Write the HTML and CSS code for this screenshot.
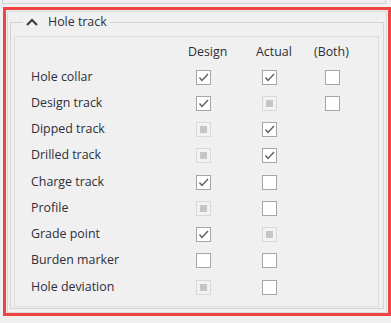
FILE: index.html
```html
<!DOCTYPE html>
<html lang="en">
<head>
    <meta charset="UTF-8">
    <title>Hole track</title>
    <link rel="stylesheet" href="styles.css">
</head>
<body>
    <div class="prev"></div>

    <div class="highlight">
        <div class="panel">
            <fieldset class="group">
                <legend class="group-title">
                    <svg class="chevron" width="12" height="8" viewBox="0 0 12 8"><path d="M1 7 L6 2 L11 7"/></svg>
                    <span>Hole track</span>
                </legend>
                <div class="inner">
                    <div class="grid">
                        <div class="cell"></div>
                        <div class="cell head">Design</div>
                        <div class="cell head">Actual</div>
                        <div class="cell head">(Both)</div>

                        <div class="cell label">Hole collar</div>
                        <div class="cell col-design"><span class="cb checked"><svg viewBox="0 0 13 13"><path d="M2.5 6.5 L5 9.5 L11 3"/></svg></span></div>
                        <div class="cell col-actual"><span class="cb checked"><svg viewBox="0 0 13 13"><path d="M2.5 6.5 L5 9.5 L11 3"/></svg></span></div>
                        <div class="cell col-both"><span class="cb"></span></div>

                        <div class="cell label">Design track</div>
                        <div class="cell col-design"><span class="cb checked"><svg viewBox="0 0 13 13"><path d="M2.5 6.5 L5 9.5 L11 3"/></svg></span></div>
                        <div class="cell col-actual"><span class="cb ind"><i></i></span></div>
                        <div class="cell col-both"><span class="cb"></span></div>

                        <div class="cell label">Dipped track</div>
                        <div class="cell col-design"><span class="cb ind"><i></i></span></div>
                        <div class="cell col-actual"><span class="cb checked"><svg viewBox="0 0 13 13"><path d="M2.5 6.5 L5 9.5 L11 3"/></svg></span></div>
                        <div class="cell col-both"></div>

                        <div class="cell label">Drilled track</div>
                        <div class="cell col-design"><span class="cb ind"><i></i></span></div>
                        <div class="cell col-actual"><span class="cb checked"><svg viewBox="0 0 13 13"><path d="M2.5 6.5 L5 9.5 L11 3"/></svg></span></div>
                        <div class="cell col-both"></div>

                        <div class="cell label">Charge track</div>
                        <div class="cell col-design"><span class="cb checked"><svg viewBox="0 0 13 13"><path d="M2.5 6.5 L5 9.5 L11 3"/></svg></span></div>
                        <div class="cell col-actual"><span class="cb"></span></div>
                        <div class="cell col-both"></div>

                        <div class="cell label">Profile</div>
                        <div class="cell col-design"><span class="cb ind"><i></i></span></div>
                        <div class="cell col-actual"><span class="cb"></span></div>
                        <div class="cell col-both"></div>

                        <div class="cell label">Grade point</div>
                        <div class="cell col-design"><span class="cb checked"><svg viewBox="0 0 13 13"><path d="M2.5 6.5 L5 9.5 L11 3"/></svg></span></div>
                        <div class="cell col-actual"><span class="cb ind"><i></i></span></div>
                        <div class="cell col-both"></div>

                        <div class="cell label">Burden marker</div>
                        <div class="cell col-design"><span class="cb"></span></div>
                        <div class="cell col-actual"><span class="cb"></span></div>
                        <div class="cell col-both"></div>

                        <div class="cell label">Hole deviation</div>
                        <div class="cell col-design"><span class="cb ind"><i></i></span></div>
                        <div class="cell col-actual"><span class="cb"></span></div>
                        <div class="cell col-both"></div>
                    </div>
                </div>
            </fieldset>
        </div>
    </div>
</body>
</html>
```

FILE: styles.css
```css
body {
    margin: 0;
    background-color: #f0f0f0;
    font-family: "Open Sans", sans-serif;
    font-size: 12.4px;
    color: #2e2e3a;
    width: 391px;
    height: 323px;
    overflow: hidden;
}

.prev {
    margin: 0 5px 0 2px;
    height: 3px;
    border: 1px solid #d2d2d2;
    border-top: none;
}

.highlight {
    margin: 3px 0 0 3px;
    width: 380px;
    height: 301px;
    padding: 1px;
    border: 3px solid #f04444;
}

.panel {
    height: 297px;
    border: 1px solid #d9d9d9;
    padding: 2px 2px 1px 2px;
}

.group {
    margin: 0;
    padding: 0 0 1px 0;
    min-inline-size: 0;
    border: 1px solid #d4d4d4;
}

.group-title {
    margin-left: 12px;
    padding: 0 3px;
    display: flex;
    align-items: center;
    height: 16px;
    line-height: 16px;
}

.chevron {
    display: block;
    margin-right: 10px;
}

.chevron path {
    fill: none;
    stroke: #3a3a3a;
    stroke-width: 2;
}

.inner {
    margin: 6px 4px 0 3px;
    height: 268px;
    border: 1px solid #dcdcdc;
    padding-top: 1px;
    padding-left: 16px;
}

.grid {
    display: grid;
    grid-template-columns: 157px 68px 58px 1fr;
    grid-template-rows: 26px repeat(9, 26.25px);
}

.cell {
    display: flex;
    align-items: center;
}

.label {
    padding-bottom: 2px;
}

.col-design .cb {
    margin-left: 8px;
}

.col-actual .cb {
    margin-left: 6px;
}

.col-both .cb {
    margin-left: 11px;
}

.cb {
    box-sizing: border-box;
    width: 15px;
    height: 15px;
    border: 1px solid #a6a6a6;
    background-color: #fff;
    display: block;
}

.cb svg {
    display: block;
    width: 13px;
    height: 13px;
}

.cb svg path {
    fill: none;
    stroke: #5e5e5e;
    stroke-width: 1.4;
}

.cb.ind {
    border-color: #d9d9d9;
    background-color: #f2f2f2;
    padding: 3px;
}

.cb.ind i {
    display: block;
    width: 7px;
    height: 7px;
    background-color: #c6c6c6;
}
```
